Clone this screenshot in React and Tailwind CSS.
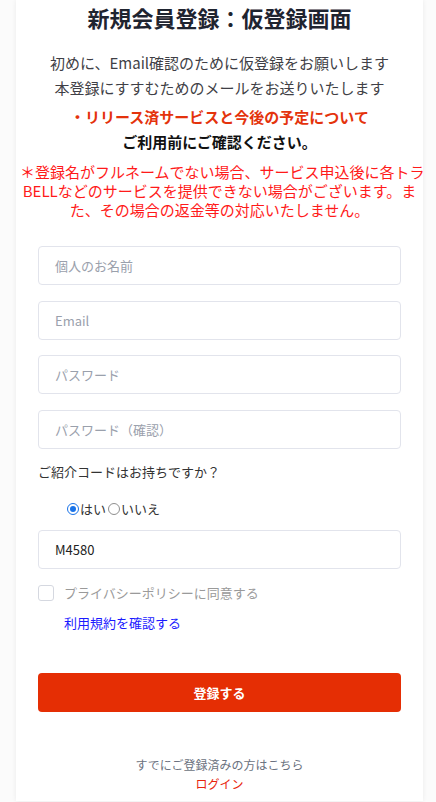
export default function App() {
  const font = { fontFamily: '"Noto Sans CJK JP", "Noto Sans", sans-serif' };

  return (
    <div className="min-h-screen bg-[#fbfbfb]" style={font}>
      <div className="ml-[16px] w-[407px] bg-white px-[22px] shadow-[0_0_5px_rgba(0,0,0,0.07)]">
        {/* Title */}
        <h1 className="pt-[2px] text-center text-[22px] font-bold leading-[30px] text-[#1f2430]">
          新規会員登録：仮登録画面
        </h1>

        {/* Intro */}
        <div className="mt-[18px] text-center text-[15px] leading-[25px] text-[#3f3f46]">
          <p>初めに、Email確認のために仮登録をお願いします</p>
          <p>本登録にすすむためのメールをお送りいたします</p>
        </div>
        <p className="mt-[4px] text-center text-[15px] font-bold leading-[25px] text-[#e4330c]">
          ・リリース済サービスと今後の予定について
        </p>
        <p className="text-center text-[15px] font-bold leading-[25px] text-[#111]">
          ご利用前にご確認ください。
        </p>

        {/* Note */}
        <p className="-mx-[18px] mt-[8px] whitespace-nowrap text-center text-[15px] leading-[19px] text-[#ff1a1a]">
          ＊登録名がフルネームでない場合、サービス申込後に各トラ
          <br />
          BELLなどのサービスを提供できない場合がございます。ま
          <br />
          た、その場合の返金等の対応いたしません。
        </p>

        {/* Inputs */}
        <div className="mt-[27px]">
          <div className="flex h-[39px] items-center rounded-[4px] border border-[#e2e4ec] px-4 text-[13px] text-[#9aa0ac]">
            個人のお名前
          </div>
          <div className="mt-[16px] flex h-[39px] items-center rounded-[4px] border border-[#e2e4ec] px-4 text-[13px] text-[#9aa0ac]">
            Email
          </div>
          <div className="mt-[15px] flex h-[39px] items-center rounded-[4px] border border-[#e2e4ec] px-4 text-[13px] text-[#9aa0ac]">
            パスワード
          </div>
          <div className="mt-[16px] flex h-[39px] items-center rounded-[4px] border border-[#e2e4ec] px-4 text-[13px] text-[#9aa0ac]">
            パスワード（確認）
          </div>
        </div>

        {/* Referral */}
        <p className="mt-[13px] text-[13px] leading-[20px] text-[#333]">ご紹介コードはお持ちですか？</p>
        <div className="mt-[17px] flex h-[20px] items-center pl-[29px] text-[13px] text-[#333]">
          <span className="flex h-[12px] w-[12px] items-center justify-center rounded-full border-[1.5px] border-[#1a73e8] bg-white">
            <span className="h-[6px] w-[6px] rounded-full bg-[#1a73e8]" />
          </span>
          <span className="ml-[1px]">はい</span>
          <span className="ml-[2px] h-[12px] w-[12px] rounded-full border border-[#8f8f8f] bg-white" />
          <span className="ml-[1px]">いいえ</span>
        </div>
        <div className="mt-[11px] flex h-[39px] items-center rounded-[4px] border border-[#e2e4ec] px-4 text-[13px] text-[#222]">
          M4580
        </div>

        {/* Privacy */}
        <div className="mt-[14px] flex h-[20px] items-center">
          <span className="h-[16px] w-[16px] rounded-[3px] border border-[#d5d8e0] bg-white" />
          <span className="ml-[10px] text-[13px] text-[#9a9a9a]">プライバシーポリシーに同意する</span>
        </div>
        <p className="mt-[10px] pl-[26px] text-[13px] leading-[20px] text-[#1a1aff]">利用規約を確認する</p>

        {/* Submit */}
        <button className="mt-[40px] flex h-[39px] w-full items-center justify-center rounded-[4px] bg-[#e52e04] text-[13px] font-bold text-white">
          登録する
        </button>

        {/* Login */}
        <div className="mt-[43px] pb-[8px] text-center text-[12px] leading-[19px]">
          <p className="text-[#6b7280]">すでにご登録済みの方はこちら</p>
          <p className="text-[#e8240c]">ログイン</p>
        </div>
      </div>
    </div>
  );
}
